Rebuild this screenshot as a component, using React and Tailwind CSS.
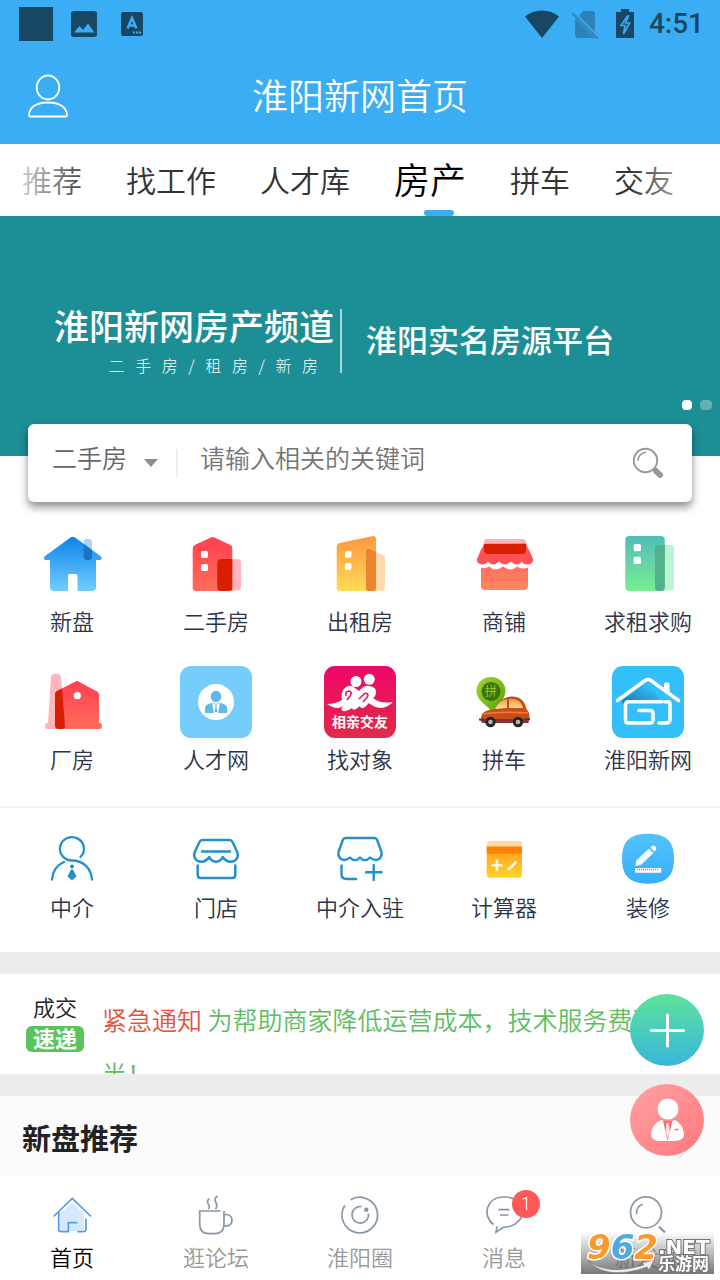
import { useState } from 'react';

const tabs = ['推荐', '找工作', '人才库', '房产', '拼车', '交友'];

/* ---------- Status bar ---------- */

function StatusBar() {
  return (
    <div className="flex h-12 items-center justify-between pl-[19px] pr-4 text-[#184763]">
      <div className="flex items-center">
        <span className="block h-[34px] w-[34px] bg-[#184763]" />
        <svg className="ml-[18px] h-[26px] w-[26px]" viewBox="0 0 26 26">
          <rect width="26" height="26" rx="3" fill="currentColor" />
          <path d="M3 21.500L8.500 15l3.500 4 5-6.500 6.500 9z" fill="#3aadf4" />
        </svg>
        <svg className="ml-6 h-6 w-[22px]" viewBox="0 0 22 24">
          <rect width="22" height="24" rx="2.500" fill="currentColor" />
          <path d="M6.500 16.500L11 6l4.500 10.500M8 13.500h6" fill="none" stroke="#3aadf4" strokeWidth="2.400" />
          <path d="M12 20.500h2m1 0h2m1 0h2" stroke="#3aadf4" strokeWidth="2" />
        </svg>
      </div>
      <div className="flex items-center">
        <svg className="h-[30px] w-9" viewBox="0 0 36 30">
          <path d="M18 29L1 7.500C10-.5 26-.5 35 7.500z" fill="currentColor" />
        </svg>
        <svg className="ml-3 h-[30px] w-[26px]" viewBox="0 0 26 30" opacity="0.4">
          <path d="M3 9l20 20H6a3 3 0 0 1-3-3zM7 7l4-5h10a2 2 0 0 1 2 2v19z" fill="currentColor" />
          <path d="M.5 4.500l25 25" stroke="currentColor" strokeWidth="2" />
        </svg>
        <svg className="ml-[17px] h-[30px] w-5" viewBox="0 0 20 30">
          <path d="M6 0h8v3h5v26H1V3h5z" fill="currentColor" />
          <path d="M12.500 7L6 16.500h4L8.500 25 14.500 14h-4L13.500 7z" fill="none" stroke="#3aadf4" strokeWidth="1.600" />
        </svg>
        <span className="ml-[14px] font-[Roboto,sans-serif] text-[28px] font-medium leading-8">4:51</span>
      </div>
    </div>
  );
}

/* ---------- Category icons (72 x 72) ---------- */

function NewHouseIcon() {
  return (
    <svg className="h-[72px] w-[72px]" viewBox="0 0 72 72">
      <defs>
        <linearGradient id="newHouse" x1="0" y1="0" x2="0" y2="1">
          <stop offset="0" stopColor="#0c84e8" />
          <stop offset="1" stopColor="#72cdff" />
        </linearGradient>
      </defs>
      <rect x="47.700" y="11" width="8.300" height="21" rx="3" fill="#a9d3f8" />
      <path d="M34.500 9.500Q36.700 7.800 39 9.500L65 28.500Q67 32 63.500 32H60v27q0 4-4 4H41.500V48q0-2-2-2H34q-2 0-2 2v15H18q-4 0-4-4V32h-3.500Q6.500 32 8.500 28.500z" fill="url(#newHouse)" />
      <path d="M47.700 16L56 22v7q0 3-3 3h-2.300q-3 0-3-3z" fill="#1a74c4" />
    </svg>
  );
}

function SecondHandIcon() {
  return (
    <svg className="h-[72px] w-[72px]" viewBox="0 0 72 72">
      <defs>
        <linearGradient id="secondHand" x1="0" y1="0" x2="0" y2="1">
          <stop offset="0" stopColor="#ff4052" />
          <stop offset="1" stopColor="#ff6b59" />
        </linearGradient>
      </defs>
      <rect x="37.300" y="31" width="23.700" height="31.500" rx="4" fill="#ffb5b9" />
      <path d="M31 9.500q1.700-.8 3.400 0L50.500 17q1.800 1 1.800 3v40q0 3-3 3H15.700q-3 0-3-3V21q0-3 2-4z" fill="url(#secondHand)" />
      <path d="M41.300 31h11v29q0 3-3 3h-8q-4 0-4-4V35q0-4 4-4z" fill="#d81f02" />
      <rect x="21" y="23" width="7" height="7" rx="1.500" fill="#fff" />
      <rect x="21" y="36" width="7" height="7" rx="1.500" fill="#fff" />
    </svg>
  );
}

function RentIcon() {
  return (
    <svg className="h-[72px] w-[72px]" viewBox="0 0 72 72">
      <defs>
        <linearGradient id="rentOut" x1="0" y1="0" x2="0" y2="1">
          <stop offset="0" stopColor="#ff9642" />
          <stop offset="1" stopColor="#ffdc54" />
        </linearGradient>
      </defs>
      <path d="M42 23q0-3 3-2l14 6q2 1 2 3v29q0 4-4 4H46q-4 0-4-4z" fill="#ffd9ad" />
      <path d="M12.700 19q0-3 3-4L48 8.200q4-.8 4 3V60q0 3-3 3H15.700q-3 0-3-3z" fill="url(#rentOut)" />
      <path d="M42 23q0-3 3-2l7 3v36q0 3-3 3h-4q-3 0-3-3z" fill="#ed832f" />
      <path d="M21 25q0-1.500 1.500-1.700L26 23q1.500 0 1.500 1.500V28q0 1.500-1.500 1.700l-3.500.3Q21 30 21 28.500zM21 37q0-1.500 1.500-1.700L26 35q1.500 0 1.500 1.500V40q0 1.500-1.500 1.700l-3.500.3Q21 42 21 40.500z" fill="#fff" />
    </svg>
  );
}

function ShopIcon() {
  return (
    <svg className="h-[72px] w-[72px]" viewBox="0 0 72 72">
      <defs>
        <linearGradient id="shopBody" x1="0" y1="0" x2="0" y2="1">
          <stop offset="0" stopColor="#ff6d60" />
          <stop offset="1" stopColor="#ff8a5e" />
        </linearGradient>
      </defs>
      <path d="M16 15v-1q0-3 3-3h36q3 0 3 3v2z" fill="#ffb3b6" />
      <path d="M13 39.500q4 2 8-1 6 6 14 0 8 6 14 0 5 3.500 11 1v18.500q0 4-4 4H17q-4 0-4-4z" fill="url(#shopBody)" />
      <path d="M16 15.700h42q1 3 3.500 7L65 31q.5 5-5 5.500-5 0-6-3-5 6-11 0-6 6-12 0-6 6-11 0-2 3-6 3-5.500-.5-5-5.500l3.500-8.300q2.500-4 3.500-7z" fill="#ff5056" />
      <path d="M16 15.700h42V22q0 4-4 4H20q-4 0-4-4z" fill="#d81f02" />
    </svg>
  );
}

function WantedIcon() {
  return (
    <svg className="h-[72px] w-[72px]" viewBox="0 0 72 72">
      <defs>
        <linearGradient id="wanted" x1="0" y1="0" x2="0" y2="1">
          <stop offset="0" stopColor="#52bcb9" />
          <stop offset="1" stopColor="#78ee90" />
        </linearGradient>
      </defs>
      <rect x="43" y="17" width="19" height="45.500" rx="4" fill="#baf4d5" />
      <rect x="13.300" y="8" width="39.500" height="55" rx="4" fill="url(#wanted)" />
      <path d="M47 17h5.800v42q0 4-4 4H47q-4 0-4-4V21q0-4 4-4z" fill="#52b08c" />
      <rect x="21.700" y="16" width="7.300" height="7.300" rx="1.500" fill="#fff" />
      <rect x="21.700" y="28.700" width="7.300" height="7.300" rx="1.500" fill="#fff" />
    </svg>
  );
}

function FactoryIcon() {
  return (
    <svg className="h-[72px] w-[72px]" viewBox="0 0 72 72">
      <defs>
        <linearGradient id="factory" x1="0" y1="0" x2="0" y2="1">
          <stop offset="0" stopColor="#ff4052" />
          <stop offset="1" stopColor="#ff6b59" />
        </linearGradient>
      </defs>
      <path d="M15 11q.3-3 3.500-3H21q3.500 0 4 3l4 49q0 3-3 3H11q-2 0-2-2v-2q0-2 2-2h1z" fill="#ffb5b9" />
      <path d="M39.500 15.500q1.500-.8 3 0L61 25.500q2 1.200 2 3V57h1q1.700 0 1.700 2v2q0 2-2 2H23q-4 0-4-4V28q0-2 2-3z" fill="url(#factory)" />
      <path d="M21 25l5-2.500L29 60q0 3-3 3h-3q-4 0-4-4V28q0-2 2-3z" fill="#d81f02" />
      <circle cx="41.300" cy="29.700" r="3.600" fill="#fff" />
    </svg>
  );
}

function TalentIcon() {
  return (
    <svg className="h-[72px] w-[72px]" viewBox="0 0 72 72">
      <rect width="72" height="72" rx="11" fill="#74cdfa" />
      <circle cx="36" cy="36" r="18" fill="#fff" />
      <ellipse cx="36" cy="30.500" rx="5.300" ry="5.800" fill="#60b9ea" />
      <path d="M25 47v-4q0-4 3.500-5l4.500-1.500L36 38l3-1.500 4.500 1.500q3.700 1 3.700 5v4z" fill="#60b9ea" />
      <path d="M32 37l2 10h4l2-10-4 1.500z" fill="#fff" />
      <path d="M35 38.500h2l-.6 2 1 5.500h-2.800l1-5.500z" fill="#60b9ea" />
    </svg>
  );
}

function DatingIcon() {
  return (
    <svg className="h-[72px] w-[72px]" viewBox="0 0 72 72">
      <defs>
        <linearGradient id="dating" x1="0" y1="0" x2="0" y2="1">
          <stop offset="0" stopColor="#f00568" />
          <stop offset="1" stopColor="#df2b49" />
        </linearGradient>
      </defs>
      <rect width="72" height="72" rx="11" fill="url(#dating)" />
      <circle cx="32" cy="15.500" r="5.500" fill="#fff" />
      <circle cx="45.300" cy="13.300" r="5.500" fill="#fff" />
      <path d="M3 38q9 0 15-4-2-9 4-13 6-3 9 1l4 3q5-6 10-5 8 1 7 7 0 3-3 5 7 6 20 4-6 6-13 6-7-1-11-5l-4 4q-4 3-5-1l-4 3q-3 2-4-1-5 4-9 3-3-1 0-5-6 5-16-2z" fill="#fff" />
      <path d="M22 30q-1-5 3-5 4 1 1 5l-3 4M35 33l5-5q3-2 4 1 0 2-5 7" fill="none" stroke="#e81658" strokeWidth="1.600" />
      <text x="36" y="61" textAnchor="middle" fontSize="14" fontWeight="700" fill="#fff">相亲交友</text>
    </svg>
  );
}

function CarpoolIcon() {
  return (
    <svg className="h-[72px] w-[72px]" viewBox="0 0 72 72">
      <defs>
        <linearGradient id="pin" x1="0" y1="0" x2="1" y2="1">
          <stop offset="0" stopColor="#a4d62b" />
          <stop offset="1" stopColor="#56a008" />
        </linearGradient>
        <linearGradient id="carGlass" x1="0" y1="0" x2="0" y2="1">
          <stop offset="0" stopColor="#f39a3d" />
          <stop offset="1" stopColor="#ffe1a0" />
        </linearGradient>
      </defs>
      <path d="M23 11c8 0 14.500 6 14.500 14 0 9-9 14-13 22C20 39 8.500 35 8.500 25 8.500 17 15 11 23 11z" fill="url(#pin)" />
      <circle cx="23" cy="25.500" r="9.500" fill="#39750a" />
      <text x="23" y="30" textAnchor="middle" fontSize="12" fill="#9bce32">拼</text>
      <path d="M13 52q0-6 8-8l6-1q5-12 16-12.500Q56 30 58.500 43q3 3 3 8l-1 6H16q-4-1-3-5z" fill="#c64d1c" />
      <path d="M27 43q4-9 12-10v9zM41 33q12-1 14 9H41z" fill="url(#carGlass)" />
      <path d="M14 48q20-3 46-1" fill="none" stroke="#ef8030" strokeWidth="1.500" />
      <path d="M11.500 53h50l-2 4h-45z" fill="#873232" />
      <path d="M11 53.500h5M57 53h5" stroke="#513b3c" strokeWidth="2" />
      <circle cx="22.500" cy="56" r="5.200" fill="#252525" />
      <circle cx="50" cy="56" r="5.200" fill="#252525" />
      <circle cx="22.500" cy="56" r="2.300" fill="#b5b5b5" />
      <circle cx="50" cy="56" r="2.300" fill="#b5b5b5" />
    </svg>
  );
}

function LocalNetIcon() {
  return (
    <svg className="h-[72px] w-[72px]" viewBox="0 0 72 72">
      <defs>
        <linearGradient id="roofShade" x1="0" y1="1" x2="1" y2="0">
          <stop offset="0.200" stopColor="#1c86ba" />
          <stop offset="0.800" stopColor="#33bffa" />
        </linearGradient>
      </defs>
      <rect width="72" height="72" rx="11" fill="#33bffa" />
      <path d="M9 35L36 16l12 18H16l-3 5z" fill="url(#roofShade)" />
      <g fill="none" stroke="#fff" strokeWidth="3.600" strokeLinejoin="round" strokeLinecap="round">
        <path d="M5.500 34.500L33 14.500q3-2 6 0l27.500 20" />
        <path d="M50 35.700H16.500q-3 0-3 3V54q0 3 3 3H38q3 0 3-3v-6.500q0-3-3-3H27" />
        <path d="M53 35.700h2.500q2.500 0 2.500 2.500V53q0 4-4 4h-7" />
      </g>
      <path d="M52 22v-4q0-1.500 1.500-1.500H56q1.500 0 1.500 1.500v8" fill="#fff" />
    </svg>
  );
}

/* ---------- Service icons (64 x 64) ---------- */

function AgentIcon() {
  return (
    <svg className="h-16 w-16" viewBox="0 0 64 64" fill="none" stroke="#2190cb" strokeWidth="2.300" strokeLinecap="round">
      <path d="M40.500 29A12 11.700 0 1 0 32 32.500C43 32.500 51 40 52 51.500" />
      <path d="M12 51.500C12.500 43 17 37 24 34" />
      <circle cx="32" cy="38.500" r="2" fill="#2190cb" stroke="none" />
      <path d="M31 41.500h2l3.500 7L32 52.500l-4.500-4z" fill="#2190cb" stroke="none" />
    </svg>
  );
}

function StoreIcon() {
  return (
    <svg className="h-16 w-16" viewBox="0 0 64 64" fill="none" stroke="#2190cb" strokeWidth="2.500" strokeLinecap="round" strokeLinejoin="round">
      <path d="M18.500 12h27q2 0 3 2l5 10.500c1.300 4-1 9.200-6.500 9.200-4 0-6.500-2-8.300-4.700-3 6.300-10.400 6.300-13.400 0-1.800 2.700-4.300 4.700-8.300 4.700-5.500 0-7.800-5.200-6.500-9.200l5-10.500q1-2 3-2z" />
      <path d="M18 23.500h28M13.700 37.500V47q0 3 3 3h31.600q3 0 3-3v-9.500" />
    </svg>
  );
}

function StoreAddIcon() {
  return (
    <svg className="h-16 w-16" viewBox="0 0 64 64" fill="none" stroke="#2190cb" strokeWidth="2.400" strokeLinecap="round" strokeLinejoin="round">
      <path d="M17.500 10h29q2 0 2.700 2l4.300 12c.8 3-1 8-6 8-3 0-4-1-5.500-2.500-3 3.500-7 3.500-10 0-3 3.500-7 3.500-10 0C20.500 31 19.500 32 16.500 32c-5 0-6.800-5-6-8l4.300-12q.7-2 2.700-2z" />
      <path d="M13.500 37.500V46q0 5 5 5H28M45.700 37v15M38 44.300h15.500" />
    </svg>
  );
}

function CalculatorIcon() {
  return (
    <svg className="h-16 w-16" viewBox="0 0 64 64">
      <defs>
        <linearGradient id="calc" x1="0" y1="0" x2="0" y2="1">
          <stop offset="0" stopColor="#fe9a1e" />
          <stop offset="1" stopColor="#ffd42c" />
        </linearGradient>
      </defs>
      <rect x="14.700" y="18" width="35.300" height="31.700" rx="3" fill="url(#calc)" />
      <path d="M14.700 19v-3q0-3 3-3H47q3 0 3 3v3z" fill="#ffd9a6" />
      <path d="M14.700 18.500H50V24q0 1.700-1.700 1.700H16.400q-1.700 0-1.700-1.700z" fill="#fd8204" />
      <path d="M20.500 37.300h9M25 32.800v9M37 41l6.500-6.500" stroke="#fff6d8" strokeWidth="2.600" strokeLinecap="round" />
    </svg>
  );
}

function DecorateIcon() {
  return (
    <svg className="h-16 w-16" viewBox="0 0 64 64">
      <defs>
        <linearGradient id="decorate" x1="0" y1="0" x2="0" y2="1">
          <stop offset="0" stopColor="#54c3fd" />
          <stop offset="1" stopColor="#36aefb" />
        </linearGradient>
      </defs>
      <path d="M32 5.700C51 5.700 58 14 58 30.500S51 55.700 32 55.700 6 47 6 30.500 13 5.700 32 5.700z" fill="url(#decorate)" />
      <path d="M19.300 38l1-5.500L33 20.500l4.500 4.500-12.700 12z" fill="#f2faff" />
      <path d="M34.500 19.300l1.500-1.400q1.500-1 3 .3l.8.900q1.200 1.500 0 3l-1.300 1.300z" fill="#fff" />
      <rect x="19" y="40" width="26.300" height="4.700" rx="1" fill="#fff" />
      <path d="M21 41.500h22" stroke="#4aa7df" strokeWidth="1.500" strokeDasharray="1 1" />
    </svg>
  );
}

/* ---------- Bottom nav icons (48 x 48) ---------- */

function HomeIcon() {
  return (
    <svg className="h-12 w-12" viewBox="0 0 48 48" fill="none" stroke="#559ce8" strokeWidth="1.700">
      <path d="M12 21L24 11l12 10v14q0 4-4 4H12z" fill="#d5e8fc" stroke="none" />
      <path d="M5.500 24.500L24.300 6.500 43 24.500M10.700 20v17q0 2.700 2.700 2.700h7v-9h9M38 26.500V37q0 2.700-2.700 2.700h-6" />
    </svg>
  );
}

function CupIcon() {
  return (
    <svg className="h-12 w-12" viewBox="0 0 48 48" fill="none" stroke="#8896a6" strokeWidth="1.700">
      <path d="M28.500 19H7.700v13q0 9.700 9.500 9.700h5.300q9.500 0 9.500-9.700V19M32 22.500h1.500q6.500 0 6.500 5.700t-6.500 5.700H32" />
      <path d="M17.500 6.500c-6 4 2.500 6-1 10.500M25.500 4c-7 5 3 7-2 13" />
    </svg>
  );
}

function CircleIcon() {
  return (
    <svg className="h-12 w-12" viewBox="0 0 48 48" fill="none" stroke="#8896a6" strokeWidth="1.700">
      <path d="M14.700 7.800A17.800 17.800 0 1 1 8.800 13.500" />
      <path d="M25.500 14.600a8.300 8.300 0 1 0 7 7" />
      <circle cx="30.300" cy="17.700" r="2.200" fill="#8896a6" stroke="none" />
    </svg>
  );
}

function MessageIcon() {
  return (
    <svg className="h-12 w-12" viewBox="0 0 48 48" fill="none" stroke="#8896a6" strokeWidth="1.700">
      <path d="M13.500 32.500C2 24 6 5 24 5s23.500 16 14 24.500C35 33 30 35 23.500 35.300L16 40.300l1-6" />
      <path d="M18.500 17.700h11M20 23h8.500" />
    </svg>
  );
}

function DiscoverIcon() {
  return (
    <svg className="h-12 w-12" viewBox="0 0 48 48" fill="none" stroke="#8896a6" strokeWidth="1.700">
      <circle cx="22" cy="20.300" r="15.500" />
      <path d="M12.500 21.500Q12.500 14.500 18 12.500" strokeLinecap="round" />
      <path d="M35 34.500l6 6" strokeWidth="2.200" />
    </svg>
  );
}

const categories = [
  { label: '新盘', Icon: NewHouseIcon },
  { label: '二手房', Icon: SecondHandIcon },
  { label: '出租房', Icon: RentIcon },
  { label: '商铺', Icon: ShopIcon },
  { label: '求租求购', Icon: WantedIcon },
  { label: '厂房', Icon: FactoryIcon },
  { label: '人才网', Icon: TalentIcon },
  { label: '找对象', Icon: DatingIcon },
  { label: '拼车', Icon: CarpoolIcon },
  { label: '淮阳新网', Icon: LocalNetIcon },
];

const services = [
  { label: '中介', Icon: AgentIcon },
  { label: '门店', Icon: StoreIcon },
  { label: '中介入驻', Icon: StoreAddIcon },
  { label: '计算器', Icon: CalculatorIcon },
  { label: '装修', Icon: DecorateIcon },
];

const navItems = [
  { label: '首页', Icon: HomeIcon },
  { label: '逛论坛', Icon: CupIcon },
  { label: '淮阳圈', Icon: CircleIcon },
  { label: '消息', Icon: MessageIcon, badge: 1 },
  { label: '新发现', Icon: DiscoverIcon },
];

/* ---------- Page sections ---------- */

function TabBar() {
  const [active, setActive] = useState('房产');

  return (
    <div className="relative h-[72px] overflow-hidden bg-white">
      <div className="flex h-full gap-11 whitespace-nowrap pl-[22px]">
        {tabs.map((tab) => (
          <button
            key={tab}
            type="button"
            onClick={() => setActive(tab)}
            className={tab === active ? 'relative pb-1 text-[36px] text-black' : 'pb-[2px] text-[30px] text-[#333]'}
          >
            {tab}
            {tab === active && (
              <span className="absolute bottom-0 right-3 h-[6px] w-[30px] rounded-full bg-[#3aadf4]" />
            )}
          </button>
        ))}
      </div>
      <div className="pointer-events-none absolute inset-y-0 left-0 w-[90px] bg-gradient-to-r from-white to-transparent" />
      <div className="pointer-events-none absolute inset-y-0 right-0 w-[90px] bg-gradient-to-l from-white to-transparent" />
    </div>
  );
}

function Banner() {
  return (
    <div className="relative flex h-[240px] items-start bg-[#1c8e95] pl-[54px] pt-[93px] text-white">
      <div className="flex h-16 flex-col items-end border-r-2 border-[#a4d6d6] pr-[6px]">
        <h2 className="text-[35px] font-medium leading-8">淮阳新网房产频道</h2>
        <p className="mt-3 whitespace-pre pr-4 text-base font-light leading-6">二   手   房   /   租   房   /   新   房</p>
      </div>
      <p className="pl-6 text-[31px] font-medium leading-[60px]">淮阳实名房源平台</p>
      <div className="absolute bottom-[46px] right-2 flex gap-2">
        <span className="h-[10px] w-[10px] rounded-[4px] bg-white" />
        <span className="h-[10px] w-3 rounded-[4px] bg-white/30" />
      </div>
    </div>
  );
}

function SearchBox() {
  return (
    <form className="relative mx-7 -mt-8 flex h-[78px] items-center rounded-md bg-white pl-6 pr-7 text-[25px] text-[#666] shadow-[0_5px_8px_rgba(0,0,0,0.45)]">
      <select
        aria-label="房源类型"
        className="mb-3 w-[92px] appearance-none bg-transparent leading-9 focus:outline-none"
      >
        <option>二手房</option>
        <option>出租房</option>
        <option>新盘</option>
      </select>
      <svg className="pointer-events-none h-2 w-[14px]" viewBox="0 0 14 8">
        <path d="M0 0h14L7 8z" fill="#8c8c8c" />
      </svg>
      <span className="ml-[18px] h-7 w-[2px] bg-[#eee]" />
      <input
        type="text"
        aria-label="关键词"
        placeholder="请输入相关的关键词"
        className="mb-3 ml-[22px] min-w-0 flex-1 leading-9 placeholder:text-[#757575] focus:outline-none"
      />
      <button type="submit" aria-label="搜索">
        <svg className="h-8 w-8" viewBox="0 0 32 32" fill="none" stroke="#999">
          <circle cx="13.500" cy="13.500" r="11.700" strokeWidth="1.900" />
          <path d="M6 14q0-7 8-9" strokeWidth="1.500" />
          <path d="M21.500 21.500l2 2" strokeWidth="2" />
          <path d="M24 24l4 4" strokeWidth="6" strokeLinecap="round" />
        </svg>
      </button>
    </form>
  );
}

function NoticeBar() {
  return (
    <section className="flex h-[100px] overflow-hidden bg-white pl-[26px] pr-12">
      <div className="flex w-[58px] shrink-0 flex-col items-center pt-4">
        <span className="text-[22px] leading-8 text-[#222]">成交</span>
        <span className="mt-1 flex h-[26px] w-full items-center justify-center rounded-md bg-[#58c45b] pb-1 text-[22px] font-bold leading-[22px] text-white">
          速递
        </span>
      </div>
      <p className="ml-[18px] pt-[18px] text-[25px] leading-[54px] text-[#5dbd60]">
        <a href="#notice">
          <span className="text-[#e4533c]">紧急通知</span> 为帮助商家降低运营成本，技术服务费减半！
        </a>
      </p>
    </section>
  );
}

function FloatingButtons() {
  return (
    <div className="fixed bottom-[124px] right-4 z-10 flex flex-col gap-[18px]">
      <button type="button" aria-label="发布" className="h-[72px] w-[74px] rounded-[50%] bg-gradient-to-b from-[#5ee298] to-[#3ab6da]">
        <svg className="h-full w-full" viewBox="0 0 74 72">
          <path d="M21.500 36.500h32M37.500 21v31" stroke="#fff" strokeWidth="3" strokeLinecap="round" />
        </svg>
      </button>
      <button type="button" aria-label="客服" className="h-[72px] w-[74px] rounded-[50%] bg-gradient-to-br from-[#ffa0a4] to-[#ff787c]">
        <svg className="h-full w-full overflow-visible" viewBox="0 0 74 72">
          <circle cx="38" cy="25" r="10.500" fill="#fff" />
          <path d="M31 36q7 3 14 0 8 4 9 14 0 7-9 7H30q-9 0-9-7 1-10 10-14z" fill="#fff" />
          <path d="M33 37l4.500 20L42.500 37z" fill="#f57377" />
          <path d="M36.500 39h2l1.500 9-2.500 6-2-6z" fill="#fff" opacity="0.8" />
          <path d="M44.500 45.500h4" stroke="#f57377" strokeWidth="1.500" />
          <path d="M49 74l8-8" stroke="#ccc" strokeWidth="1" />
        </svg>
      </button>
    </div>
  );
}

function SiteMark() {
  return (
    <div className="pointer-events-none fixed bottom-[6px] right-[6px] z-30 h-[42px] w-[133px] bg-gradient-to-b from-white/10 to-[#555]/80">
      <svg className="h-full w-full overflow-visible" viewBox="0 0 133 42">
        <path d="M7 29q20 15 56 4l-2-2 12-3-5 10-2-3Q26 49 7 29z" fill="#eee" stroke="#666" strokeWidth="0.500" />
        <g fontFamily="DejaVu Sans" fontSize="34" fontWeight="700" fontStyle="italic" stroke="#fff" strokeWidth="3" paintOrder="stroke" strokeLinejoin="round">
          <text x="6" y="27"><tspan fill="#f99a2b">9</tspan><tspan fill="#4aaae2">6</tspan><tspan fill="#f99a2b">2</tspan></text>
        </g>
        <g fill="#fff" stroke="#777" strokeWidth="2" paintOrder="stroke">
          <text x="77" y="22" fontFamily="DejaVu Sans" fontSize="20" fontWeight="700">.NET</text>
          <text x="77" y="38" fontSize="17" fontWeight="700">乐游网</text>
        </g>
      </svg>
    </div>
  );
}

function BottomNav() {
  return (
    <nav className="fixed inset-x-0 bottom-0 z-20 grid grid-cols-5 bg-white pb-2 pt-4">
      {navItems.map(({ label, Icon, badge }, i) => (
        <a
          key={label}
          href="#"
          className={i === 0 ? 'flex flex-col items-center text-black' : 'flex flex-col items-center text-[#999]'}
        >
          <span className="relative">
            <Icon />
            {badge && (
              <span className="absolute -right-3 -top-[2px] flex h-7 w-7 items-center justify-center rounded-full bg-[#ff5858] font-[Roboto,sans-serif] text-lg leading-7 text-white">
                {badge}
              </span>
            )}
          </span>
          <span className="text-[22px] leading-8">{label}</span>
        </a>
      ))}
    </nav>
  );
}

export default function App() {
  return (
    <div className="min-h-screen bg-[#ededed] pb-[104px] font-['Noto_Sans_CJK_SC',sans-serif] font-[350]">
      <header className="bg-[#3aadf4]">
        <StatusBar />
        <div className="grid h-24 grid-cols-[1fr_auto_1fr] items-center px-6">
          <a href="#me" aria-label="我的" className="w-12">
            <svg className="h-12 w-12" viewBox="0 0 48 48" fill="none" stroke="#fff" strokeWidth="1.800" strokeLinejoin="round">
              <ellipse cx="24" cy="15.500" rx="11.300" ry="12" />
              <path d="M5 43.500C5 35 13 30.500 24 30.500s19 4.500 19 13q0 1-1 1H6q-1 0-1-1z" />
            </svg>
          </a>
          <h1 className="pb-1 text-[36px] leading-[54px] text-white">淮阳新网首页</h1>
        </div>
      </header>

      <TabBar />

      <main>
        <section className="bg-white">
          <Banner />
          <SearchBox />

          {/* Categories */}
          <div className="grid grid-cols-5 gap-y-[26px] border-b-2 border-[#f3f3f3] pb-7 pt-[26px]">
            {categories.map(({ label, Icon }) => (
              <a key={label} href="#" className="flex flex-col items-center text-[#2b3448]">
                <Icon />
                <span className="text-[22px] leading-10">{label}</span>
              </a>
            ))}
          </div>

          {/* Services */}
          <div className="grid grid-cols-5 pb-8 pt-5">
            {services.map(({ label, Icon }) => (
              <a key={label} href="#" className="flex flex-col items-center text-[#2b3448]">
                <Icon />
                <span className="text-[22px] leading-7">{label}</span>
              </a>
            ))}
          </div>
        </section>

        <div className="h-[22px]" />
        <NoticeBar />
        <div className="h-[22px]" />

        <section className="flex h-20 items-center bg-[#fbfbfb] px-[22px] pt-1">
          <h2 className="text-[29px] font-bold text-[#222]">新盘推荐</h2>
        </section>
      </main>

      <FloatingButtons />
      <BottomNav />
      <SiteMark />
    </div>
  );
}
